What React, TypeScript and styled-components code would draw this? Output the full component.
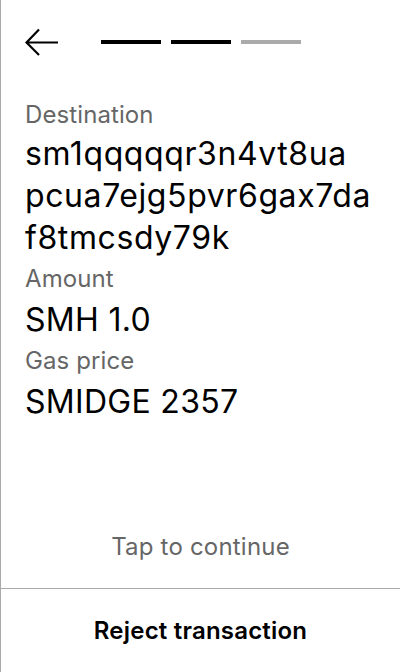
import React from "react";
import styled, { createGlobalStyle } from "styled-components";

const Global = createGlobalStyle`
  html, body { margin: 0; padding: 0; background: #fff; }
  body { font-family: Inter, "Noto Sans", sans-serif; color: #000; }
`;

const Screen = styled.div`
  box-sizing: border-box;
  width: 400px;
  height: 672px;
  border-left: 1px solid #aaa;
  display: flex;
  flex-direction: column;
  background: #fff;
`;

const Header = styled.div`
  display: flex;
  align-items: center;
  height: 84px;
  padding-left: 24px;
`;

const BackButton = styled.button`
  border: 0;
  background: none;
  padding: 0;
  width: 34px;
  height: 30px;
  display: flex;
  align-items: center;
  cursor: pointer;
`;

const Steps = styled.div`
  display: flex;
  gap: 10px;
  margin-left: 42px;
  margin-top: -1px;
`;

const Step = styled.div<{ $done: boolean }>`
  width: 60px;
  height: 4px;
  background: ${(p) => (p.$done ? "#000" : "#aaa")};
`;

const Content = styled.div`
  flex: 1;
  padding: 11px 24px 0;
  display: flex;
  flex-direction: column;
`;

const Label = styled.div`
  font-size: 24px;
  line-height: 40px;
  color: #666;
  letter-spacing: 0.1px;
`;

const Value = styled.div<{ $tight?: boolean }>`
  font-size: 32px;
  line-height: 42px;
  color: #000;
  letter-spacing: 0.3px;
  margin-top: ${(p) => (p.$tight ? "-2px" : "0")};
`;

const AddressLine = styled.span`
  display: block;
  white-space: nowrap;
  letter-spacing: 0.6px;
`;

const Hint = styled.div`
  text-align: center;
  font-size: 24px;
  line-height: 32px;
  color: #666;
  padding-bottom: 25px;
  letter-spacing: 0.2px;
`;

const Footer = styled.button`
  border: 0;
  border-top: 1px solid #aaa;
  background: none;
  height: 84px;
  padding: 0;
  font-family: Inter, "Noto Sans", sans-serif;
  font-size: 24px;
  line-height: 32px;
  font-weight: 600;
  letter-spacing: 0.2px;
  color: #000;
  cursor: pointer;
`;

const address = "sm1qqqqqr3n4vt8uapcua7ejg5pvr6gax7daf8tmcsdy79k";
const addressLines = [address.slice(0, 17), address.slice(17, 36), address.slice(36)];

export default function App() {
  return (
    <>
      <Global />
      <Screen>
        <Header>
          <BackButton aria-label="Back">
            <svg width="34" height="30" viewBox="0 0 34 30" fill="none">
              <path d="M14 2.5 L1.5 15.5 L14 28 M1.5 15.5 H33" stroke="#000" strokeWidth="2.2" />
            </svg>
          </BackButton>
          <Steps>
            <Step $done />
            <Step $done />
            <Step $done={false} />
          </Steps>
        </Header>
        <Content>
          <Label>Destination</Label>
          <Value $tight>
            {addressLines.map((l) => (
              <AddressLine key={l}>{l}</AddressLine>
            ))}
          </Value>
          <Label>Amount</Label>
          <Value>SMH 1.0</Value>
          <Label>Gas price</Label>
          <Value>SMIDGE 2357</Value>
        </Content>
        <Hint>Tap to continue</Hint>
        <Footer>Reject transaction</Footer>
      </Screen>
    </>
  );
}
